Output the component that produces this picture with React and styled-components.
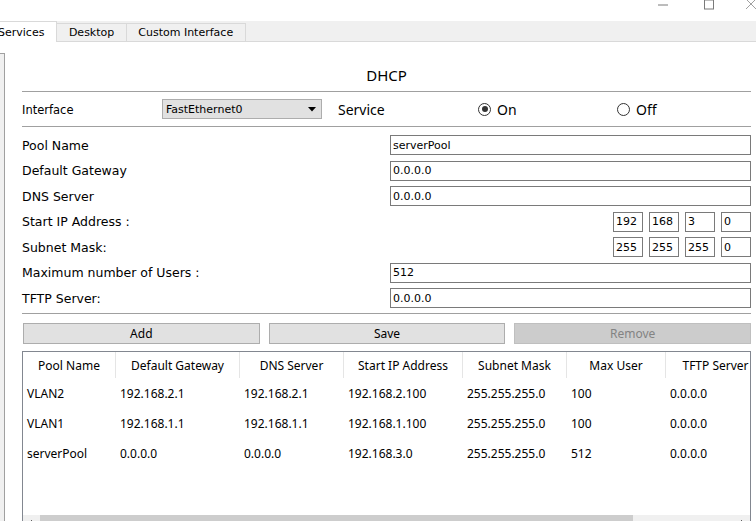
import React from "react";
import styled, { createGlobalStyle } from "styled-components";

const GlobalStyle = createGlobalStyle`
  html, body {
    margin: 0;
    padding: 0;
    background: #fff;
    overflow: hidden;
  }
  body {
    font-family: "DejaVu Sans", sans-serif;
    color: #000;
  }
`;

const columns = [
  { title: "Pool Name", width: 93 },
  { title: "Default Gateway", width: 124 },
  { title: "DNS Server", width: 104 },
  { title: "Start IP Address", width: 119 },
  { title: "Subnet Mask", width: 104 },
  { title: "Max User", width: 99 },
  { title: "TFTP Server", width: 100 },
];

const pools = [
  ["VLAN2", "192.168.2.1", "192.168.2.1", "192.168.2.100", "255.255.255.0", "100", "0.0.0.0"],
  ["VLAN1", "192.168.1.1", "192.168.1.1", "192.168.1.100", "255.255.255.0", "100", "0.0.0.0"],
  ["serverPool", "0.0.0.0", "0.0.0.0", "192.168.3.0", "255.255.255.0", "512", "0.0.0.0"],
];

const gridCols = columns.map((c) => c.width + "px").join(" ");

const App = () => {
  return (
    <Window>
      <GlobalStyle />
      <TitleBar>
        <Spacer />
        <ControlButton $w={46}>
          <svg width="10" height="10" viewBox="0 0 10 10">
            <line x1="0" y1="5" x2="10" y2="5" stroke="#7a7a7a" strokeWidth="1" />
          </svg>
        </ControlButton>
        <ControlButton $w={46}>
          <svg width="10" height="10" viewBox="0 0 10 10">
            <rect x="0.5" y="0" width="9" height="9" fill="none" stroke="#7a7a7a" strokeWidth="1" />
          </svg>
        </ControlButton>
        <ControlButton $w={24}>
          <svg width="10" height="10" viewBox="0 0 10 10">
            <path d="M0 -1 L10 9 M10 -1 L0 9" stroke="#a0a0a0" strokeWidth="1" />
          </svg>
        </ControlButton>
      </TitleBar>

      <TabBar>
        <Tab $active>Services</Tab>
        <Tab>Desktop</Tab>
        <Tab>Custom Interface</Tab>
      </TabBar>

      <Body>
        <SideStrip />
        <Main>
          <Title>DHCP</Title>

          <InterfaceRow>
            <SmallLabel>Interface</SmallLabel>
            <Select>
              <span>FastEthernet0</span>
              <svg width="8" height="5" viewBox="0 0 8 5">
                <path d="M0 0 L8 0 L4 4.5 Z" fill="#000" />
              </svg>
            </Select>
            <ServiceLabel>Service</ServiceLabel>
            <RadioOption $w={139}>
              <Radio $checked />
              <span>On</span>
            </RadioOption>
            <RadioOption>
              <Radio />
              <span>Off</span>
            </RadioOption>
          </InterfaceRow>

          <Form>
            <FieldLabel>Pool Name</FieldLabel>
            <Field>serverPool</Field>
            <FieldLabel>Default Gateway</FieldLabel>
            <Field>0.0.0.0</Field>
            <FieldLabel>DNS Server</FieldLabel>
            <Field>0.0.0.0</Field>
            <FieldLabel>Start IP Address :</FieldLabel>
            <Octets>
              <Octet>192</Octet>
              <Octet>168</Octet>
              <Octet>3</Octet>
              <Octet>0</Octet>
            </Octets>
            <FieldLabel>Subnet Mask:</FieldLabel>
            <Octets>
              <Octet>255</Octet>
              <Octet>255</Octet>
              <Octet>255</Octet>
              <Octet>0</Octet>
            </Octets>
            <FieldLabel>Maximum number of Users :</FieldLabel>
            <Field>512</Field>
            <FieldLabel>TFTP Server:</FieldLabel>
            <Field>0.0.0.0</Field>
          </Form>

          <ButtonRow>
            <Button>Add</Button>
            <Button>Save</Button>
            <Button disabled>Remove</Button>
          </ButtonRow>

          <TableBox>
            <TableGrid>
              {columns.map((c, i) => (
                <HeadCell key={i}>{c.title}</HeadCell>
              ))}
              {pools.map((row, r) =>
                row.map((v, i) => <Cell key={r + "-" + i}>{v}</Cell>)
              )}
            </TableGrid>
            <Filler />
            <ScrollBar>
              <ScrollArrow>
                <svg width="17" height="17" viewBox="0 0 17 17">
                  <polyline points="9,5 5.5,8.5 9,12" fill="none" stroke="#606060" strokeWidth="1" />
                </svg>
              </ScrollArrow>
              <Thumb style={{ width: 593 }} />
              <Track />
              <ScrollArrow>
                <svg width="17" height="17" viewBox="0 0 17 17">
                  <polyline points="8,5 11.5,8.5 8,12" fill="none" stroke="#606060" strokeWidth="1" />
                </svg>
              </ScrollArrow>
            </ScrollBar>
          </TableBox>
        </Main>
      </Body>
    </Window>
  );
};

const Window = styled.div`
  width: 756px;
  height: 521px;
  overflow: hidden;
  display: flex;
  flex-direction: column;
  background: #fff;
`;

const TitleBar = styled.div`
  height: 21px;
  display: flex;
  align-items: flex-start;
  flex-shrink: 0;
  overflow: hidden;
`;

const Spacer = styled.div`
  flex: 1;
`;

const ControlButton = styled.div`
  width: ${(p) => p.$w}px;
  flex-shrink: 0;
  height: 21px;
  display: flex;
  justify-content: ${(p) => (p.$w < 46 ? "flex-end" : "center")};
  overflow: hidden;
  svg {
    display: block;
    overflow: visible;
  }
`;

const TabBar = styled.div`
  height: 20px;
  flex-shrink: 0;
  background: #f0f0f0;
  border-bottom: 1px solid #d9d9d9;
  display: flex;
  align-items: flex-end;
`;

const Tab = styled.div`
  height: ${(p) => (p.$active ? "21px" : "18px")};
  margin-bottom: ${(p) => (p.$active ? "-1px" : "0")};
  margin-left: -1px;
  padding: 0 ${(p) => (p.$active ? "12px" : "11.5px")};
  box-sizing: border-box;
  background: ${(p) => (p.$active ? "#fff" : "#f0f0f0")};
  border: 1px solid #d9d9d9;
  border-bottom: none;
  font-size: 11px;
  display: flex;
  align-items: center;
  white-space: nowrap;
  &:first-child {
    margin-left: -15px;
  }
`;

const Body = styled.div`
  flex: 1;
  display: flex;
  min-height: 0;
`;

const SideStrip = styled.div`
  width: 4px;
  margin-top: 11px;
  background: #f0f0f0;
  border-top: 1px solid #a0a0a0;
  border-right: 1px solid #a0a0a0;
  flex-shrink: 0;
`;

const Main = styled.div`
  flex: 1;
  padding: 0 5px 0 17px;
  display: flex;
  flex-direction: column;
  min-width: 0;
`;

const Title = styled.div`
  margin-top: 23px;
  height: 20px;
  padding-bottom: 6px;
  line-height: 20px;
  text-align: center;
  font-family: "Noto Sans", sans-serif;
  font-size: 15px;
  border-bottom: 1px solid #a0a0a0;
  flex-shrink: 0;
`;

const InterfaceRow = styled.div`
  height: 34px;
  display: flex;
  align-items: center;
  border-bottom: 1px solid #a0a0a0;
  flex-shrink: 0;
`;

const SmallLabel = styled.div`
  width: 140px;
  font-size: 11.5px;
  padding-top: 2px;
`;

const Select = styled.div`
  width: 160px;
  height: 20px;
  box-sizing: border-box;
  background: #e1e1e1;
  border: 1px solid #adadad;
  display: flex;
  align-items: center;
  justify-content: space-between;
  padding: 0 5px 0 3px;
  font-size: 11px;
`;

const ServiceLabel = styled.div`
  width: 140px;
  margin-left: 16px;
  font-family: "Noto Sans", sans-serif;
  font-size: 14px;
`;

const RadioOption = styled.div`
  width: ${(p) => (p.$w ? p.$w + "px" : "auto")};
  display: flex;
  align-items: center;
  gap: 6px;
  font-family: "Noto Sans", sans-serif;
  font-size: 14px;
`;

const Radio = styled.span`
  width: 13px;
  height: 13px;
  box-sizing: border-box;
  border-radius: 50%;
  border: 1px solid #333;
  background: #fff;
  display: flex;
  align-items: center;
  justify-content: center;
  &::after {
    content: "";
    width: 6px;
    height: 6px;
    border-radius: 50%;
    background: ${(p) => (p.$checked ? "#333" : "transparent")};
  }
`;

const Form = styled.div`
  display: grid;
  grid-template-columns: 368px 1fr;
  grid-auto-rows: 20px;
  row-gap: 5.5px;
  padding: 8px 0 5px;
  border-bottom: 1px solid #a0a0a0;
  flex-shrink: 0;
`;

const FieldLabel = styled.div`
  font-size: 12.5px;
  display: flex;
  align-items: center;
  white-space: nowrap;
`;

const Field = styled.div`
  height: 20px;
  box-sizing: border-box;
  border: 1px solid #7a7a7a;
  padding-left: 2px;
  font-size: 11px;
  display: flex;
  align-items: center;
`;

const Octets = styled.div`
  display: flex;
  justify-content: flex-end;
  gap: 6px;
`;

const Octet = styled(Field)`
  width: 30px;
  height: 20px;
`;

const ButtonRow = styled.div`
  margin-top: 9px;
  padding-left: 1px;
  display: flex;
  gap: 9px;
  flex-shrink: 0;
`;

const Button = styled.button`
  flex: 1;
  height: 21px;
  box-sizing: border-box;
  margin: 0;
  padding: 0;
  background: ${(p) => (p.disabled ? "#cccccc" : "#e1e1e1")};
  border: 1px solid ${(p) => (p.disabled ? "#bfbfbf" : "#adadad")};
  color: ${(p) => (p.disabled ? "#838383" : "#000")};
  font-family: "Noto Sans", sans-serif;
  font-size: 12px;
  line-height: 19px;
`;

const TableBox = styled.div`
  margin-top: 7px;
  height: 181px;
  flex-shrink: 0;
  box-sizing: border-box;
  border: 1px solid #828790;
  border-bottom: none;
  overflow: hidden;
  display: flex;
  flex-direction: column;
  font-family: "Noto Sans", sans-serif;
  font-size: 12px;
`;

const TableGrid = styled.div`
  display: grid;
  grid-template-columns: ${gridCols};
  grid-template-rows: 26px;
  grid-auto-rows: 30px;
  width: max-content;
`;

const HeadCell = styled.div`
  border-right: 1px solid #e5e5e5;
  display: flex;
  align-items: center;
  justify-content: center;
  white-space: nowrap;
`;

const Cell = styled.div`
  display: flex;
  align-items: center;
  padding-left: 4px;
  white-space: nowrap;
`;

const Filler = styled.div`
  flex: 1;
`;

const ScrollBar = styled.div`
  height: 17px;
  flex-shrink: 0;
  display: flex;
  background: #f0f0f0;
`;

const ScrollArrow = styled.div`
  width: 17px;
  height: 17px;
  flex-shrink: 0;
  svg {
    display: block;
  }
`;

const Thumb = styled.div`
  height: 17px;
  background: #cdcdcd;
  flex-shrink: 0;
`;

const Track = styled.div`
  flex: 1;
`;

export default App;
